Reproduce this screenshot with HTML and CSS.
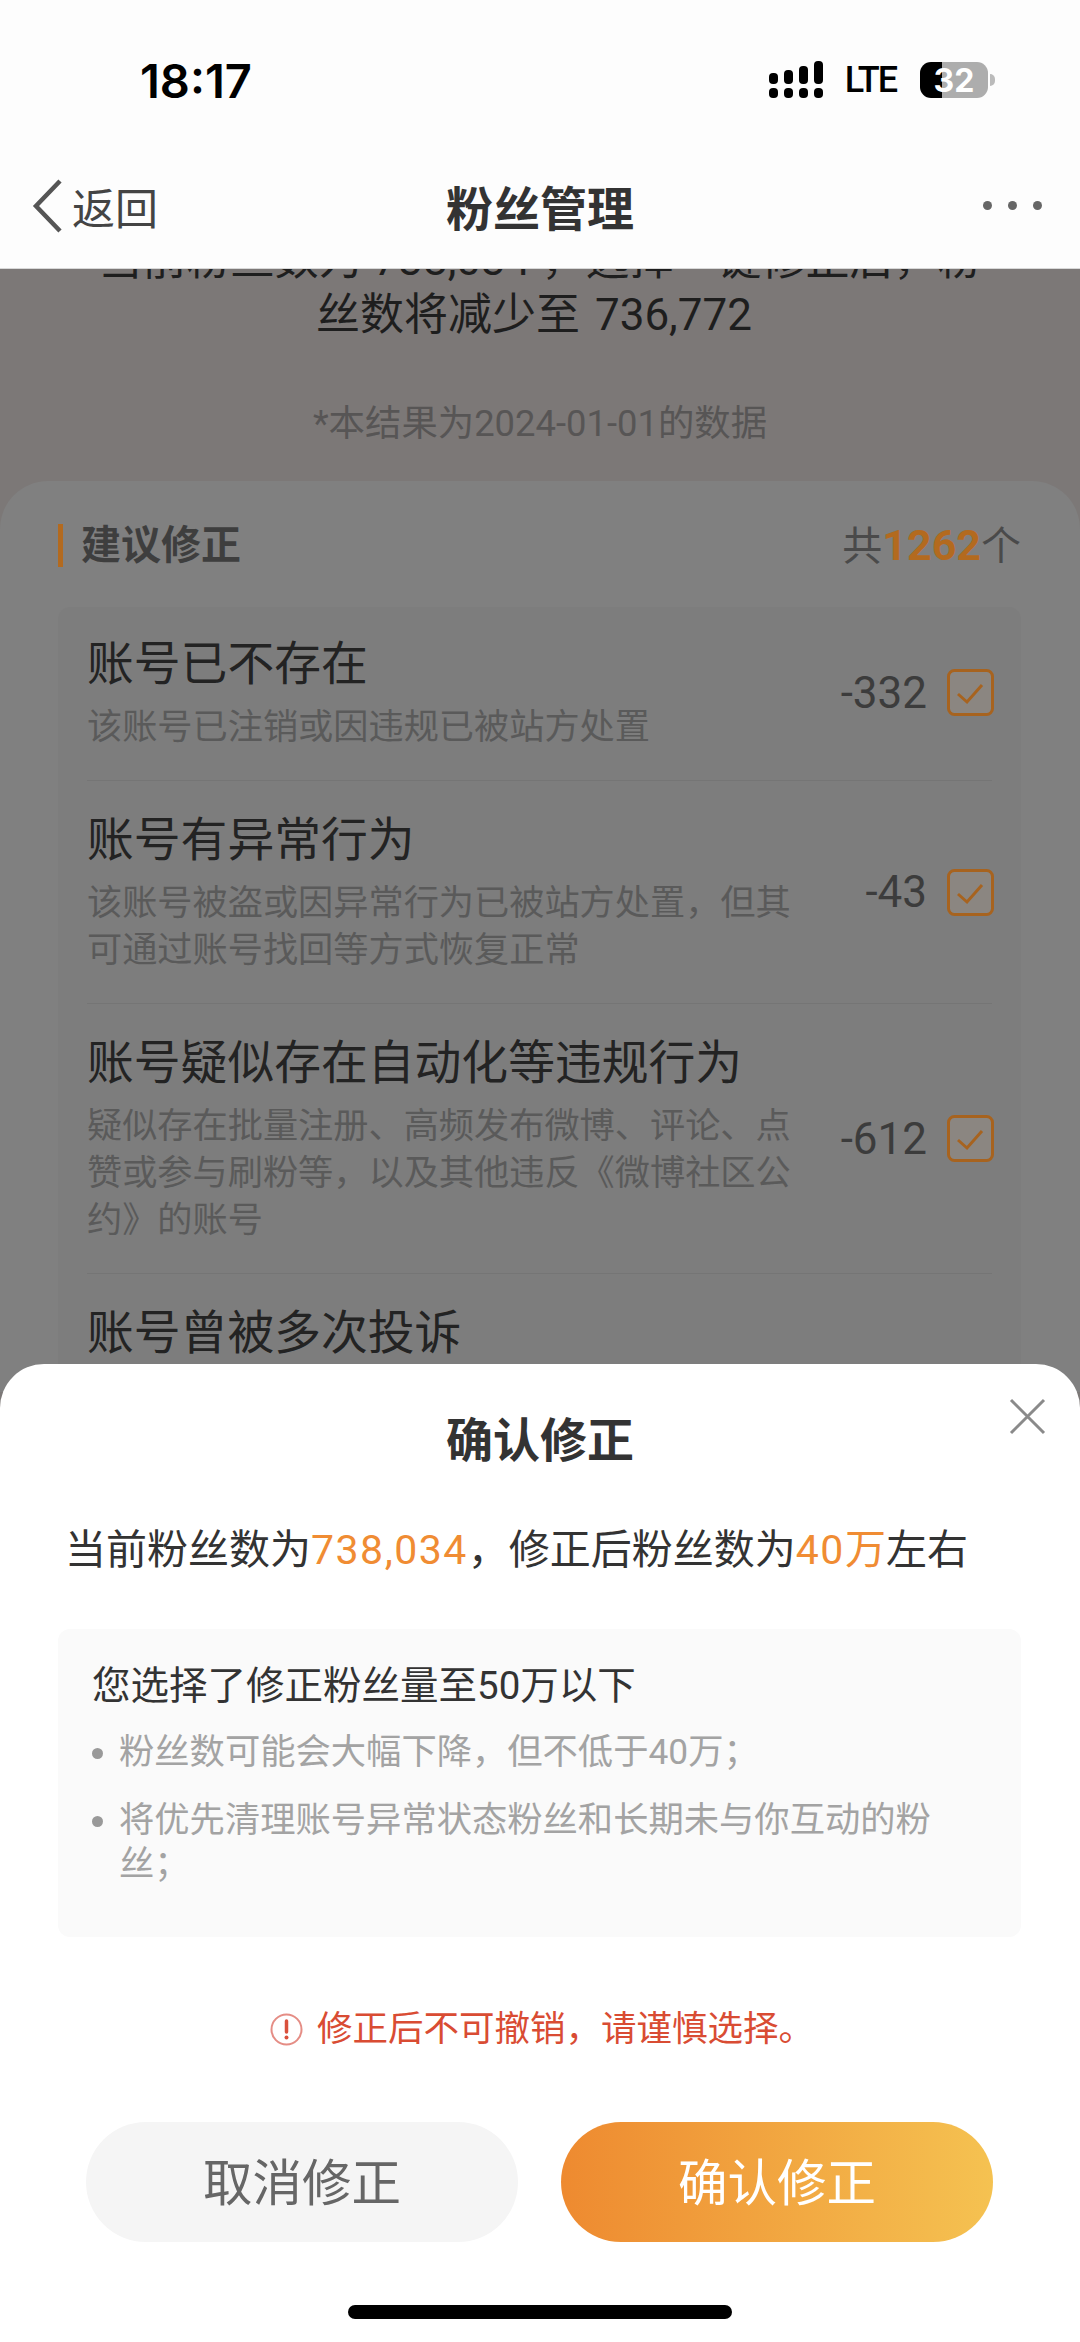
FILE: index.html
```html
<!DOCTYPE html>
<html lang="zh-CN">
<head>
    <meta name="viewport" content="width=device-width">
    <title>粉丝管理</title>
    <link rel="stylesheet" href="styles.css">
</head>

<body>
    <div class="page">
        <header class="top">
            <div class="status">
                <span class="time">18:17</span>
                <div class="status-right">
                    <svg class="signal" width="54" height="38" viewBox="0 0 54 38">
                        <rect x="0" y="12" width="9" height="11" rx="4"/>
                        <rect x="15" y="9" width="9" height="14" rx="4"/>
                        <rect x="30" y="5" width="9" height="18" rx="4"/>
                        <rect x="45" y="0" width="9" height="23" rx="4"/>
                        <rect x="0" y="27" width="9" height="10" rx="4"/>
                        <rect x="15" y="27" width="9" height="10" rx="4"/>
                        <rect x="30" y="27" width="9" height="10" rx="4"/>
                        <rect x="45" y="27" width="9" height="10" rx="4"/>
                    </svg>
                    <span class="lte">LTE</span>
                    <div class="battery"><span>32</span></div>
                </div>
            </div>
            <nav class="nav">
                <div class="back">
                    <svg width="30" height="54" viewBox="0 0 30 54">
                        <path d="M28 2 L4 27 L28 52" fill="none" stroke="#555" stroke-width="4.5"/>
                    </svg>
                    <span>返回</span>
                </div>
                <div class="nav-title">粉丝管理</div>
                <div class="more"><i></i><i></i><i></i></div>
            </nav>
        </header>

        <main class="content">
            <div class="summary">
                <div>当前粉丝数为 738,034 ，选择一键修正后，粉</div>
                <div class="summary-last">丝数将减少至 736,772</div>
            </div>
            <p class="date-note">*本结果为2024-01-01的数据</p>

            <section class="card">
                <div class="card-head">
                    <h2>建议修正</h2>
                    <div class="total">共<b>1262</b>个</div>
                </div>
                <div class="reasons">
                    <div class="row">
                        <div class="row-text">
                            <h3>账号已不存在</h3>
                            <p>该账号已注销或因违规已被站方处置</p>
                        </div>
                        <span class="count">-332</span>
                        <svg class="check" width="47" height="47" viewBox="0 0 47 47">
                            <rect x="1.5" y="1.5" width="44" height="44" rx="6" fill="#8b8681" stroke="#a7631f" stroke-width="3"/>
                            <path d="M11 25 L20 33 L35 16" fill="none" stroke="#a7631f" stroke-width="3"/>
                        </svg>
                    </div>
                    <div class="row">
                        <div class="row-text">
                            <h3>账号有异常行为</h3>
                            <p>该账号被盗或因异常行为已被站方处置，但其可通过账号找回等方式恢复正常</p>
                        </div>
                        <span class="count">-43</span>
                        <svg class="check" width="47" height="47" viewBox="0 0 47 47">
                            <rect x="1.5" y="1.5" width="44" height="44" rx="6" fill="#8b8681" stroke="#a7631f" stroke-width="3"/>
                            <path d="M11 25 L20 33 L35 16" fill="none" stroke="#a7631f" stroke-width="3"/>
                        </svg>
                    </div>
                    <div class="row">
                        <div class="row-text">
                            <h3>账号疑似存在自动化等违规行为</h3>
                            <p>疑似存在批量注册、高频发布微博、评论、点赞或参与刷粉等，以及其他违反《微博社区公约》的账号</p>
                        </div>
                        <span class="count">-612</span>
                        <svg class="check" width="47" height="47" viewBox="0 0 47 47">
                            <rect x="1.5" y="1.5" width="44" height="44" rx="6" fill="#8b8681" stroke="#a7631f" stroke-width="3"/>
                            <path d="M11 25 L20 33 L35 16" fill="none" stroke="#a7631f" stroke-width="3"/>
                        </svg>
                    </div>
                    <div class="row">
                        <div class="row-text">
                            <h3>账号曾被多次投诉</h3>
                        </div>
                    </div>
                </div>
            </section>
        </main>

        <section class="sheet">
            <svg class="close" width="37" height="37" viewBox="0 0 37 37">
                <path d="M2 2 L35 35 M35 2 L2 35" fill="none" stroke="#8a8a8a" stroke-width="3"/>
            </svg>
            <h2 class="sheet-title">确认修正</h2>
            <p class="sheet-summary">当前粉丝数为<em class="num">738,034</em>，修正后粉丝数为<em><span class="num">40</span>万</em>左右</p>
            <div class="notice">
                <h3>您选择了修正粉丝量至50万以下</h3>
                <ul>
                    <li><span>粉丝数可能会大幅下降，但不低于40万；</span></li>
                    <li><span>将优先清理账号异常状态粉丝和长期未与你互动的粉丝；</span></li>
                </ul>
            </div>
            <div class="warn">
                <svg width="33" height="33" viewBox="0 0 33 33">
                    <circle cx="16.5" cy="16.5" r="15" fill="none" stroke="#e58d85" stroke-width="2"/>
                    <path d="M16.5 8 V19" stroke="#d9503c" stroke-width="3.5" stroke-linecap="round"/>
                    <circle cx="16.5" cy="24.5" r="2" fill="#d9503c"/>
                </svg>
                <span>修正后不可撤销，请谨慎选择。</span>
            </div>
            <div class="actions">
                <button class="btn btn-cancel">取消修正</button>
                <button class="btn btn-ok">确认修正</button>
            </div>
            <div class="home-bar"></div>
        </section>
    </div>
</body>
</html>
```

FILE: styles.css
```css
html, body {
    margin: 0;
    padding: 0;
}
body {
    font-family: Roboto, "Noto Sans CJK SC", sans-serif;
    background-color: #fdfdfd;
}
h2, h3, p, ul {
    margin: 0;
    padding: 0;
}
.page {
    position: relative;
    width: 1080px;
    height: 2342px;
    overflow: hidden;
    display: flex;
    flex-direction: column;
}

/* top bars */
.top {
    height: 269px;
    flex-shrink: 0;
    background-color: #fdfdfd;
    border-bottom: 1px solid #d8d8d8;
    box-sizing: border-box;
}
.status {
    height: 160px;
    display: flex;
    align-items: center;
    justify-content: space-between;
    padding: 0 92px 0 140px;
    box-sizing: border-box;
}
.time {
    font-family: Inter, sans-serif;
    font-size: 47px;
    font-weight: 600;
    color: #000;
}
.status-right {
    display: flex;
    align-items: center;
}
.signal {
    fill: #000;
}
.lte {
    font-size: 36px;
    font-weight: 500;
    letter-spacing: -2px;
    color: #000;
    margin: 0 24px 0 22px;
}
.battery {
    position: relative;
    width: 68px;
    height: 36px;
    border-radius: 11px;
    background: linear-gradient(90deg, #000 32%, #adadad 32%);
    display: flex;
    align-items: center;
    justify-content: center;
}
.battery span {
    font-family: Inter, sans-serif;
    font-size: 32px;
    font-weight: 700;
    color: #fff;
}
.battery::after {
    content: "";
    position: absolute;
    right: -7px;
    top: 12px;
    width: 5px;
    height: 12px;
    border-radius: 0 6px 6px 0;
    background-color: #bbb;
}
.nav {
    height: 91px;
    display: grid;
    grid-template-columns: 1fr auto 1fr;
    align-items: center;
    padding: 0 35px;
}
.back {
    display: flex;
    align-items: center;
    gap: 10px;
    margin-left: -3px;
    font-size: 43px;
    color: #444;
}
.nav-title {
    font-size: 47px;
    font-weight: 700;
    color: #333;
}
.more {
    display: flex;
    justify-content: flex-end;
    gap: 16px;
    margin-right: 3px;
}
.more i {
    width: 9px;
    height: 9px;
    border-radius: 50%;
    background-color: #666;
}

/* dimmed page behind the sheet */
.content {
    flex: 1;
    overflow: hidden;
    background-color: #7c7877;
}
.summary {
    margin-top: -36px;
    font-size: 44px;
    line-height: 55px;
    color: #1e1e1e;
    text-align: center;
    white-space: nowrap;
}
.summary-last {
    padding-right: 12px;
    word-spacing: 4px;
}
.date-note {
    margin-top: 59px;
    font-size: 36.4px;
    line-height: 44px;
    color: #575555;
    text-align: center;
}
.card {
    margin-top: 35px;
    padding: 43px 59px 0 58px;
    background-color: #808080;
    border-radius: 48px 48px 0 0;
}
.card-head {
    display: flex;
    align-items: center;
    justify-content: space-between;
    height: 43px;
    font-size: 40px;
    color: #4a4a4a;
    margin-bottom: 40px;
}
.card-head h2 {
    font-size: 40px;
    font-weight: 700;
    line-height: 43px;
    color: #3e3e3e;
    border-left: 5px solid #b36a1f;
    padding-left: 18px;
}
.total {
    margin-bottom: 5px;
}
.total b {
    color: #b36a1f;
    font-size: 43px;
    font-weight: 700;
}
.reasons {
    background-color: #7d7d7d;
    border-radius: 12px 12px 0 0;
    padding: 0 29px;
}
.row {
    display: flex;
    align-items: center;
    padding: 29px 0;
    border-bottom: 1px solid #757575;
}
.row:first-child {
    padding-top: 27px;
}
.row:last-child {
    border-bottom: none;
}
.row-text {
    width: 712px;
    margin-right: auto;
}
.row-text h3 {
    font-size: 46.8px;
    font-weight: 400;
    line-height: 60px;
    white-space: nowrap;
    color: #232323;
}
.row-text p {
    margin-top: 10px;
    font-size: 35.2px;
    line-height: 47px;
    color: #5a5a5a;
}
.count {
    font-size: 44px;
    color: #3c3c3c;
    margin-right: 20px;
}
.check {
    flex-shrink: 0;
    margin-right: -2px;
}

/* bottom sheet */
.sheet {
    position: absolute;
    left: 0;
    right: 0;
    bottom: 0;
    height: 978px;
    padding-top: 48px;
    box-sizing: border-box;
    background-color: #fff;
    border-radius: 44px 44px 0 0;
}
.close {
    position: absolute;
    top: 34px;
    right: 34px;
}
.sheet-title {
    font-size: 47px;
    font-weight: 700;
    line-height: 58px;
    margin-bottom: 2px;
    color: #333;
    text-align: center;
}
.sheet-summary {
    margin-top: 52px;
    padding-left: 65px;
    font-size: 41px;
    line-height: 56px;
    color: #333;
}
.sheet-summary em {
    font-style: normal;
    color: #f08c33;
}
.num {
    letter-spacing: 1.5px;
}
.notice {
    margin: 51px 59px 0 58px;
    padding: 32px 35px 51px 34px;
    background-color: #fafafa;
    border-radius: 12px;
}
.notice h3 {
    font-size: 38.5px;
    font-weight: 400;
    line-height: 50px;
    color: #333;
}
.notice ul {
    list-style: none;
    margin-top: 19px;
}
.notice li {
    display: flex;
    gap: 16px;
    width: 850px;
    font-size: 35.3px;
    line-height: 44px;
    color: #a3a3a3;
}
.notice li + li {
    margin-top: 24px;
}
.notice li::before {
    content: "";
    flex-shrink: 0;
    width: 11px;
    height: 11px;
    margin-top: 18px;
    border-radius: 50%;
    background-color: #999;
}
.warn {
    display: flex;
    align-items: center;
    gap: 14px;
    margin: 70px 0 0 270px;
    font-size: 35.5px;
    line-height: 44px;
    color: #d94c33;
}
.actions {
    display: flex;
    gap: 43px;
    margin: 71px 87px 0 86px;
}
.btn {
    flex: 1;
    height: 120px;
    padding: 0 0 5px;
    border: none;
    border-radius: 60px;
    font-family: inherit;
    font-size: 49.5px;
}
.btn-cancel {
    background-color: #f5f5f5;
    color: #666;
}
.btn-ok {
    background: linear-gradient(90deg, #ee8a30, #f5c251);
    color: #fff;
}
.home-bar {
    width: 384px;
    height: 14px;
    margin: 63px auto 0;
    border-radius: 7px;
    background-color: #000;
}
```
